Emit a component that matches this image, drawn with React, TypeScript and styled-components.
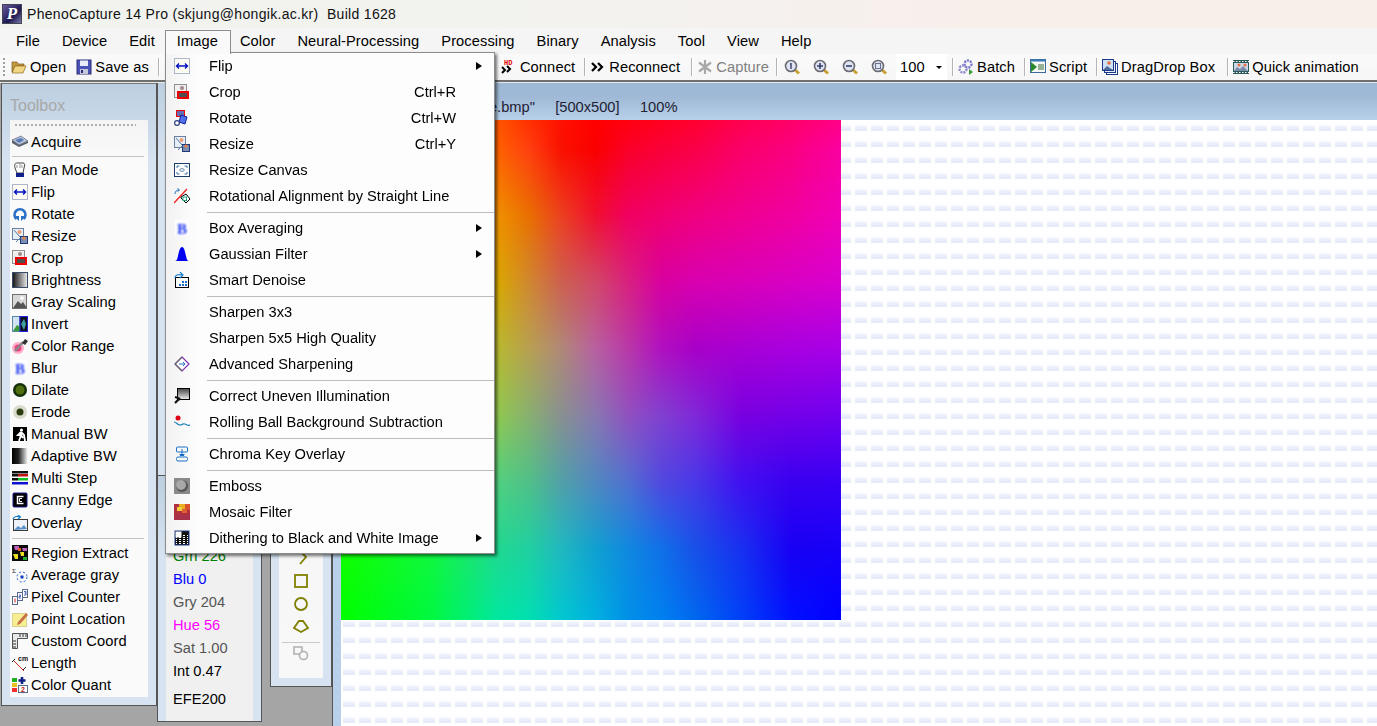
import * as React from 'react';
import styled, { createGlobalStyle } from 'styled-components';

const GlobalStyle = createGlobalStyle`
    html, body {
        margin: 0;
        padding: 0;
        height: 100%;
        overflow: hidden;
        background: #a5a5a5;
        font-family: "Liberation Sans", Arial, sans-serif;
        color: #000;
    }
`;

const Page = styled.div`
    position: relative;
    width: 1377px;
    height: 726px;
    display: flex;
    flex-direction: column;
    overflow: hidden;
`;

const TitleBar = styled.div`
    height: 28px;
    display: flex;
    align-items: center;
    gap: 5px;
    padding-left: 2px;
    background: linear-gradient(90deg, #f1f3ef 0%, #f3f2ef 45%, #f8efeb 70%, #f8efeb 100%);
    font-size: 14px;
    letter-spacing: 0.31px;
    color: #111;
    white-space: pre;
`;

const AppLogo = styled.div`
    width: 20px;
    height: 20px;
    background: linear-gradient(135deg, #6a5a9c, #1c1850 60%, #7a7aaa);
    border: 1px solid #445;
    box-sizing: border-box;
    color: #fff;
    font: italic bold 17px/18px "Liberation Serif", serif;
    text-align: center;
    letter-spacing: 0;
`;

const MenuBar = styled.div`
    height: 26px;
    display: flex;
    align-items: center;
    padding-left: 5px;
    background: #f5f5f5;
`;

const MenuLabel = styled.div<{ $open?: boolean }>`
    position: relative;
    z-index: ${p => (p.$open ? 5 : 0)};
    padding: 0 11px;
    line-height: 26px;
    font-size: 14.67px;
    letter-spacing: 0.08px;
    white-space: nowrap;
    ${p =>
        p.$open &&
        `&::before {
            content: '';
            position: absolute;
            left: -1px;
            right: -2px;
            top: 2px;
            height: 24px;
            background: #f9f9f9;
            border: 1px solid #8c8c8c;
            border-bottom: none;
            box-sizing: border-box;
            z-index: -1;
        }`}
`;

const Toolbar = styled.div`
    height: 26px;
    display: flex;
    align-items: center;
    background: linear-gradient(180deg, #fafafa, #f6f6f6);
    box-sizing: border-box;
    padding-left: 3px;
    font-size: 14.67px;
    letter-spacing: 0.1px;
    white-space: nowrap;
`;

const Grip = styled.div`
    width: 2px;
    height: 18px;
    margin-right: 1px;
    background: repeating-linear-gradient(180deg, #a0a0a0 0 2px, transparent 2px 4px);
`;

const ToolItem = styled.div<{ $disabled?: boolean; $end?: number }>`
    display: flex;
    align-items: center;
    gap: 3px;
    padding: 0 ${p => p.$end ?? 9}px 0 5px;
    color: ${p => (p.$disabled ? '#808080' : '#000')};
`;

const ToolSep = styled.div`
    width: 1px;
    height: 18px;
    background: #b4b4b4;
    box-shadow: 1px 0 0 #fff;
`;

const ToolGap = styled.div<{ $w: number }>`
    width: ${p => p.$w}px;
    flex: none;
`;

const ZoomButton = styled.div`
    width: 29px;
    flex: none;
    display: flex;
    justify-content: flex-start;
`;

const ZoomCombo = styled.div`
    width: 51px;
    height: 26px;
    display: flex;
    align-items: center;
    justify-content: space-between;
    box-sizing: border-box;
    padding: 0 5px 0 4px;
    margin: 0 5px 0 -4px;
    background: #fff;
    &::after {
        content: '';
        border-left: 3px solid transparent;
        border-right: 3px solid transparent;
        border-top: 3px solid #000;
    }
`;

const TopEdge = styled.div`
    height: 3px;
    background: linear-gradient(180deg, #6e6e6e 0 2px, #e8e8e8 2px);
`;

const Workspace = styled.div`
    flex: 1;
    min-height: 0;
    display: flex;
    background: #a5a5a5;
`;

const Dock = styled.div<{ $w: number; $h: number }>`
    width: ${p => p.$w}px;
    height: ${p => p.$h}px;
    flex: none;
    box-sizing: border-box;
    border: 1px solid #555;
    border-top: none;
    background: linear-gradient(180deg, #bccfe0 0, #d7e3f1 80px, #d7e3f1 100%);
`;

const ToolboxDock = styled(Dock)`
    margin-left: 1px;
    padding: 0 8px 0 8px;
    border-left-width: 1px;
    border-top: 1px solid #777;
`;

const ToolboxTitle = styled.div`
    height: 36px;
    line-height: 44px;
    font-size: 16px;
    color: #a8a8a8;
`;

const ToolList = styled.div`
    background: linear-gradient(180deg, #f4f4f4, #fafafa 40px, #fafafa);
    height: 577px;
    padding: 0 2px;
    box-sizing: border-box;
`;

const DottedRule = styled.div`
    height: 11px;
    margin: 0 10px 0 3px;
    background: repeating-linear-gradient(90deg, #b0b0b0 0 2px, transparent 2px 4px) 0 4px / 100% 2px no-repeat;
`;

const ListSep = styled.div<{ $h: number }>`
    height: ${p => p.$h}px;
    display: flex;
    align-items: center;
    &::after {
        content: '';
        flex: 1;
        height: 1px;
        margin-right: 2px;
        background: #c4c4c4;
    }
`;

const ToolRow = styled.div<{ $tall?: boolean }>`
    height: ${p => (p.$tall ? 23 : 22)}px;
    display: flex;
    align-items: center;
    gap: 3px;
    font-size: 14.67px;
    letter-spacing: 0.1px;
    white-space: nowrap;
`;

const MiddleColumn = styled.div`
    width: 105px;
    flex: none;
    display: flex;
    flex-direction: column;
`;

const ReadoutList = styled.div`
    margin: 8px 8px 8px 8px;
    height: 237px;
    box-sizing: border-box;
    background: #f0f0f0;
    padding: 38px 0 0 7px;
    font-size: 14.67px;
`;

const Readout = styled.div<{ $color: string; $h?: number }>`
    height: ${p => p.$h ?? 23}px;
    line-height: 23px;
    color: ${p => p.$color};
    white-space: nowrap;
`;

const HexReadout = styled(Readout)`
    padding-top: 5px;
`;

const ShapeDock = styled(Dock)`
    margin-left: 8px;
    padding: 0 8px 8px 8px;
    background: #d7e3f1;
`;

const ShapeList = styled.div`
    height: 100%;
    background: linear-gradient(180deg, #f2f2f2, #f8f8f8);
    display: flex;
    flex-direction: column;
    align-items: center;
    justify-content: flex-end;
    padding-bottom: 17px;
    box-sizing: border-box;
`;

const ShapeCell = styled.div<{ $h?: number }>`
    height: ${p => p.$h ?? 23}px;
    display: flex;
    align-items: center;
    justify-content: center;
`;

const ShapeSep = styled.div`
    width: 38px;
    height: 1px;
    margin: 4px 0 2px;
    background: #c8c8c8;
`;

const ChildWindow = styled.div`
    flex: 1;
    min-width: 0;
    display: flex;
    flex-direction: column;
    border-left: 1px solid #555;
`;

const ChildHeader = styled.div`
    height: 37px;
    flex: none;
    display: flex;
    align-items: flex-end;
    box-sizing: border-box;
    padding: 0 0 5px 22px;
    background: linear-gradient(180deg, #9db8d4 0, #9fb9d6 14px, #b8d0e9 100%);
    font-size: 14.67px;
    color: #223;
    white-space: pre;
`;

const ChildBody = styled.div`
    flex: 1;
    display: flex;
    min-height: 0;
`;

const SideStrip = styled.div`
    width: 8px;
    flex: none;
    background: #b8d0e9;
`;

const Canvas = styled.div`
    flex: 1;
    min-width: 0;
    background-color: #fff;
    background-image: linear-gradient(90deg, transparent 12px, #fff 12px),
        linear-gradient(180deg, #f0f3fb 0, #e2e8f8 5px, #fff 5px, #fff 12px, #f9fbfe 16px);
    background-size: 16px 16px;
    background-position: 2px 6px;
`;

const Photo = styled.canvas`
    display: block;
    width: 500px;
    height: 500px;
`;

const PopupMenu = styled.div`
    position: absolute;
    left: 165px;
    top: 52px;
    z-index: 4;
    width: 330px;
    height: 502px;
    box-sizing: border-box;
    border: 1px solid #8c8c8c;
    background: linear-gradient(90deg, #f2f2f2 0, #fbfbfb 24px, #fdfdfd 31px, #fdfdfd 100%);
    box-shadow: 2px 2px 3px rgba(0, 0, 0, 0.55);
    font-size: 14.67px;
`;

const PopupItem = styled.div`
    height: 26px;
    display: flex;
    align-items: center;
    white-space: nowrap;
`;

const PopupIcon = styled.div`
    width: 29px;
    margin-left: 1px;
    flex: none;
    display: flex;
    justify-content: center;
`;

const PopupText = styled.div`
    margin-left: 13px;
    flex: 1;
`;

const Shortcut = styled.div`
    margin-right: 38px;
`;

const SubArrow = styled.div`
    width: 0;
    height: 0;
    margin-right: 12px;
    border-left: 6px solid #000;
    border-top: 4.5px solid transparent;
    border-bottom: 4.5px solid transparent;
`;

const PopupSep = styled.div`
    height: 6px;
    display: flex;
    align-items: center;
    padding-left: 41px;
    &::after {
        content: '';
        flex: 1;
        height: 1px;
        background: #bdbdbd;
    }
`;

// colour samples of the test image, bilinear between them
const gridX = [0, 90, 156, 187, 220, 254, 287, 320, 354, 400, 450, 500];
const gridY = [0, 28, 95, 162, 228, 295, 362, 428, 500];
const grid = [
    'ffb000 ff8000 ff5500 ff3000 ff1000 ff0000 ff0010 ff0020 ff0030 ff0050 ff0068 ff0088',
    'ffb800 ff8c00 ff6000 ff4010 fa1000 fa0000 fa0028 fa0038 fa0048 fa0068 fa0080 fa00a0',
    'ffd000 f8b000 f09000 e87000 ec4020 f01030 f00060 f00070 f00080 f00090 f000a0 f000b8',
    'f0e000 e8c400 d8a800 d08830 cc6050 d04868 d82080 d800a0 d800b0 d800b8 d800c4 d800d0',
    'c8e800 c0d020 b8b830 b8a050 b08878 b860a0 b838a8 b010c0 a800c8 a800d4 a800e0 a800e8',
    '90f000 90e030 90c850 88b070 889090 8878b0 9050c0 8040d0 8028d8 7800e0 7400e8 7000f0',
    '60f000 58e840 50d080 50c088 50a0a8 5088c0 5070d0 5048e0 4838e8 4010f0 3800f0 3800f4',
    '10ff00 10f840 20d890 20d0a0 20b8c0 10a0d0 1088e0 1070e8 1850e8 1830f0 1800f4 1800f8',
    '00ff00 00f840 00e8a0 00e0b0 00c8d0 00b0e0 0090e8 0080f0 0068f0 0040f8 0010ff 0000ff',
].map(row => row.split(' ').map(hex => [0, 2, 4].map(i => parseInt(hex.slice(i, i + 2), 16))));

const cellIndex = (stops: number[], v: number) => {
    let i = 0;
    while (i < stops.length - 2 && v >= stops[i + 1]) {
        i++;
    }
    return i;
};

const drawPicture = (ctx: CanvasRenderingContext2D) => {
    const img = ctx.createImageData(500, 500);
    for (let y = 0; y < 500; y++) {
        const r = cellIndex(gridY, y);
        const fy = (y - gridY[r]) / (gridY[r + 1] - gridY[r]);
        for (let x = 0; x < 500; x++) {
            const c = cellIndex(gridX, x);
            const fx = (x - gridX[c]) / (gridX[c + 1] - gridX[c]);
            const o = (y * 500 + x) * 4;
            for (let k = 0; k < 3; k++) {
                const top = grid[r][c][k] * (1 - fx) + grid[r][c + 1][k] * fx;
                const bottom = grid[r + 1][c][k] * (1 - fx) + grid[r + 1][c + 1][k] * fx;
                img.data[o + k] = top * (1 - fy) + bottom * fy;
            }
            img.data[o + 3] = 255;
        }
    }
    ctx.putImageData(img, 0, 0);
};

const TestImage = () => {
    const ref = React.useRef<HTMLCanvasElement>(null);
    React.useEffect(() => {
        const ctx = ref.current && ref.current.getContext('2d');
        if (ctx) {
            drawPicture(ctx);
        }
    }, []);
    return <Photo ref={ref} width={500} height={500} />;
};

const Mag = ({ children }: { children?: React.ReactNode }) => (
    <>
        <path d="M10.5 10.5l4.5 4" stroke="#c8a030" strokeWidth="3" />
        <circle cx="7" cy="7" r="5.5" fill="#dfe4f2" stroke="#6a6a72" strokeWidth="1.6" />
        {children}
    </>
);

const dither = Array.from({ length: 30 }).map((_, i) => (
    <rect key={i} x={2 + (i % 6) * 2 + (i % 2)} y={13 - Math.floor(i / 6) * 2} width="1" height="1" fill="#fff" />
));

const icons: { [name: string]: React.ReactNode } = {
    open: (
        <>
            <path d="M1 3h5l1 2h6v2H4L1 13z" fill="#c89a40" stroke="#7a5a20" strokeWidth="0.7" />
            <path d="M1 14l3-7h11l-3 7z" fill="#f2d684" stroke="#8a6a28" strokeWidth="0.7" />
        </>
    ),
    save: (
        <>
            <rect x="1" y="1" width="14" height="14" fill="#4a52b8" stroke="#2a2e78" />
            <rect x="4" y="1.5" width="8" height="5.5" fill="#e8ecf8" />
            <rect x="4" y="10" width="8" height="5" fill="#c4c8d8" />
            <rect x="5" y="11" width="2" height="3" fill="#2a2e78" />
        </>
    ),
    connect: (
        <>
            <text x="3" y="6" fontSize="7" fontWeight="bold" fill="#e00000" fontFamily="Liberation Mono, monospace">HD</text>
            <path d="M1 8l3 3-3 3M6 7l3 3-3 3" fill="none" stroke="#000" strokeWidth="2" />
        </>
    ),
    reconnect: <path d="M2 4l4 4-4 4M8 4l4 4-4 4" fill="none" stroke="#000" strokeWidth="2.2" />,
    capture: <path d="M8 1v14M2 3.5l12 9M14 3.5l-12 9" fill="none" stroke="#a8a8a8" strokeWidth="2.2" />,
    mag1: <Mag><path d="M7 4v6M6 5h1" stroke="#38406a" strokeWidth="1.4" /></Mag>,
    magPlus: <Mag><path d="M7 4v6M4 7h6" stroke="#38406a" strokeWidth="1.6" /></Mag>,
    magMinus: <Mag><path d="M4 7h6" stroke="#38406a" strokeWidth="1.6" /></Mag>,
    magFit: <Mag><rect x="4.5" y="4.5" width="5" height="5" fill="none" stroke="#6a7090" /></Mag>,
    batch: (
        <>
            <circle cx="10" cy="5" r="3.5" fill="none" stroke="#7a78c8" strokeWidth="2.4" strokeDasharray="2 1" />
            <circle cx="5" cy="10" r="3.5" fill="none" stroke="#8a88c8" strokeWidth="2.4" strokeDasharray="2 1" />
            <path d="M11 10l4 3-4 3z" fill="#3a9a3a" />
        </>
    ),
    script: (
        <>
            <rect x="0.5" y="0.5" width="15" height="13" fill="#f4f8f4" stroke="#3a6a9a" />
            <rect x="0.5" y="0.5" width="15" height="2" fill="#3a7ab8" />
            <path d="M1 3l6 5-6 5z" fill="#2a8a2a" />
            <path d="M8 6h6M8 8h6M8 10h6" stroke="#3a6a3a" />
        </>
    ),
    drag: (
        <>
            <rect x="4.5" y="4.5" width="11" height="11" fill="#fff" stroke="#1c3a8a" />
            <rect x="2.5" y="2.5" width="11" height="11" fill="#e8eef8" stroke="#1c3a8a" />
            <rect x="0.5" y="0.5" width="11" height="11" fill="#cfe0f4" stroke="#1c3a8a" />
            <path d="M1 11l4-4 3 2 3 2z" fill="#506a9a" />
            <circle cx="7" cy="4" r="1.8" fill="#e87040" />
        </>
    ),
    quick: (
        <>
            <rect x="0" y="1" width="16" height="14" fill="#2a5a5a" />
            <path d="M0 2.5h16M0 13.5h16" stroke="#fff" strokeDasharray="1.5 1.5" />
            <rect x="1" y="4" width="14" height="8" fill="#cfd8e8" />
            <path d="M1 12l3-4 3 2 3-3 5 5z" fill="#7a8aa8" />
            <circle cx="6" cy="6" r="1.5" fill="#e87040" />
            <circle cx="12" cy="6" r="1.5" fill="#e87040" />
        </>
    ),
    acquire: (
        <>
            <path d="M0 6l9-4 7 5-9 4z" fill="#b8c4d8" stroke="#6a7488" strokeWidth="0.8" />
            <path d="M0 6v3l7 4 9-4V7l-9 4z" fill="#5a606c" />
            <path d="M3 6l6-2 3 2-5 3z" fill="#5a7ab8" />
        </>
    ),
    pan: (
        <>
            <path d="M3 6c-1-5 1-5 2-5h6c2 0 2 2 1 5l-1 5H5z" fill="#fff" stroke="#444" />
            <path d="M5 3v3M8 2v4M10 3v3" stroke="#666" strokeWidth="0.7" />
            <rect x="4" y="11" width="8" height="4" fill="#10208a" />
        </>
    ),
    flip: (
        <>
            <rect x="0.5" y="0.5" width="15" height="15" fill="#fdfdf4" stroke="#6070a0" strokeDasharray="1 1" />
            <path d="M3 8h10M5 5.5L2.5 8 5 10.5M11 5.5L13.5 8 11 10.5" fill="none" stroke="#0010c0" strokeWidth="1.4" />
        </>
    ),
    rotate: (
        <>
            <path d="M4.5 13A5.5 5.5 0 1 1 11.5 13" fill="none" stroke="#2a70c8" strokeWidth="2.6" />
            <path d="M2 10h5v5zM14 10H9v5z" fill="#2a70c8" />
        </>
    ),
    resize: (
        <>
            <rect x="0.5" y="0.5" width="11" height="11" fill="#e6eef8" stroke="#6a80a0" />
            <rect x="8.5" y="8.5" width="7" height="7" fill="#8090b0" stroke="#1c3a7a" />
            <circle cx="7.5" cy="4" r="2" fill="#f0a070" />
            <circle cx="12" cy="10" r="1.6" fill="#f08040" />
            <path d="M2 2l6 7M4 14l4-4 3 3" fill="none" stroke="#5a7aa8" />
        </>
    ),
    crop: (
        <>
            <rect x="0.5" y="0.5" width="12" height="13" fill="#f0eeee" stroke="#909090" />
            <circle cx="8" cy="4" r="2" fill="#a08888" />
            <rect x="4" y="8" width="10" height="6" fill="#505050" stroke="#f00000" strokeWidth="2" />
        </>
    ),
    brightness: (
        <>
            <defs>
                <linearGradient id="lg-bright" x1="0" x2="1" y1="0" y2="0">
                    <stop offset="0" stopColor="#111" />
                    <stop offset="1" stopColor="#eee" />
                </linearGradient>
            </defs>
            <rect x="0.5" y="0.5" width="15" height="15" fill="url(#lg-bright)" stroke="#3a4a6a" />
        </>
    ),
    gray: (
        <>
            <rect x="0.5" y="0.5" width="14" height="14" fill="#d8d8d8" stroke="#707070" />
            <path d="M1 14l5-7 3 3 2-2 4 6z" fill="#555" />
            <circle cx="10" cy="4" r="1.8" fill="#fff" />
        </>
    ),
    invert: (
        <>
            <rect x="0.5" y="0.5" width="7" height="15" fill="#cfe4f0" stroke="#5a8aa8" />
            <path d="M1 15l4-6 3 2v4z" fill="#3a9a3a" />
            <rect x="8" y="0.5" width="7.5" height="15" fill="#101020" stroke="#2020e0" />
            <path d="M9 8l3-5 2 5-2 6z" fill="#40a0a0" />
        </>
    ),
    colorRange: (
        <>
            <circle cx="6" cy="10" r="6" fill="#ffb0cc" />
            <circle cx="6" cy="10" r="3.5" fill="#f04080" />
            <path d="M3 13L11 4" stroke="#888" strokeWidth="2.6" />
            <path d="M10 5l3-4 3 2-3 4z" fill="#333" />
        </>
    ),
    blur: (
        <>
            <rect x="1" y="0" width="14" height="16" fill="#fff" />
            <text x="8" y="13.5" fontSize="15" fontWeight="bold" fill="#2038f0" textAnchor="middle" fontFamily="Liberation Serif, serif" style={{ filter: 'blur(1px)' }}>B</text>
        </>
    ),
    dilate: (
        <>
            <circle cx="8" cy="8" r="7" fill="#16300a" />
            <circle cx="8" cy="8" r="4.5" fill="#4f6e10" />
        </>
    ),
    erode: (
        <>
            <circle cx="8" cy="8" r="7" fill="#d8dccc" />
            <circle cx="8" cy="8" r="3.5" fill="#2c3c10" />
        </>
    ),
    manual: (
        <>
            <rect x="1" y="1" width="14" height="14" fill="#000" />
            <circle cx="9.5" cy="4" r="1.6" fill="#fff" />
            <path d="M9 6l-3 3h3l-2 6M9 6l3 3 1 6M9 9l2 3" fill="none" stroke="#fff" strokeWidth="1.8" />
        </>
    ),
    adaptive: (
        <>
            <defs>
                <linearGradient id="lg-adaptive" x1="0" x2="1" y1="0" y2="0">
                    <stop offset="0" stopColor="#000" />
                    <stop offset="0.4" stopColor="#222" />
                    <stop offset="1" stopColor="#fff" />
                </linearGradient>
            </defs>
            <rect x="0" y="0" width="16" height="16" fill="url(#lg-adaptive)" />
        </>
    ),
    multi: (
        <>
            <rect x="0" y="1" width="16" height="2.5" fill="#111" />
            <rect x="0" y="4" width="6" height="2.5" fill="#111" />
            <rect x="6" y="4" width="10" height="2.5" fill="#c01010" />
            <rect x="0" y="8" width="6" height="2.5" fill="#111" />
            <rect x="6" y="8" width="10" height="2.5" fill="#10c020" />
            <rect x="0" y="12" width="16" height="2.5" fill="#1010d0" />
        </>
    ),
    canny: (
        <>
            <rect x="1" y="1" width="14" height="14" rx="1" fill="#000" stroke="#1c1c80" />
            <path d="M11.5 4.5h-6v7h6" fill="none" stroke="#fff" strokeWidth="1.5" />
            <path d="M10 6.5H7.5v3H10" fill="none" stroke="#fff" />
        </>
    ),
    overlay: (
        <>
            <rect x="1.5" y="4.5" width="14" height="11" fill="#eef2f8" stroke="#3a3a3a" />
            <path d="M2 15l4-4 3 2 3-3 3 4z" fill="#5a90c8" />
            <path d="M1 4c1-3 5-3 7-2M6 0l2.5 2L6 4" fill="none" stroke="#1a80d0" strokeWidth="1.2" />
        </>
    ),
    region: (
        <>
            <rect x="0" y="0" width="16" height="16" fill="#0a0a0a" />
            <path d="M2 1h5v4H3zM10 3h5v3h-4z" fill="#c060c0" />
            <path d="M1 9h5v5H3zM8 7h4v4H9z" fill="#e8e020" />
            <path d="M11 12h4v3h-4z" fill="#20b030" />
            <path d="M6 3h3v3H6z" fill="#e86020" />
        </>
    ),
    average: (
        <>
            <text x="0" y="6" fontSize="7" fill="#222" fontFamily="Liberation Serif, serif">Σ</text>
            <circle cx="10" cy="10" r="5" fill="none" stroke="#2060d0" strokeDasharray="2 2" />
            <rect x="8.5" y="8.5" width="3" height="3" fill="#1040c0" />
        </>
    ),
    pixel: (
        <>
            <rect x="0.5" y="7.5" width="5" height="8" fill="#fff" stroke="#5a6a8a" />
            <rect x="5.5" y="3.5" width="5" height="8" fill="#fff" stroke="#5a6a8a" />
            <rect x="10.5" y="0.5" width="5" height="8" fill="#fff" stroke="#5a6a8a" />
            <path d="M3 9.5v4" stroke="#d02020" />
            <path d="M7 6h1.5v1.5H7V9h2" fill="none" stroke="#2040b0" strokeWidth="0.8" />
            <path d="M12 2.5h2v1.5h-1.5M14 4v2h-2" fill="none" stroke="#2040b0" strokeWidth="0.8" />
        </>
    ),
    point: (
        <>
            <rect x="0.5" y="2.5" width="14" height="13" fill="#f6ee90" stroke="#b8b060" strokeDasharray="1 1" />
            <path d="M6 11l8-9 2 2-8 9-3 1z" fill="#c87048" />
        </>
    ),
    custom: (
        <>
            <path d="M0.5 0.5h15v5h-10v10h-5z" fill="#e8e8e8" stroke="#555" />
            <path d="M8 1v3M11 1v3M14 1v3M1 8h3M1 11h3M1 14h3" stroke="#333" />
        </>
    ),
    length: (
        <>
            <path d="M1 5l11 11" stroke="#d02020" />
            <path d="M0 7l3-3M11 15l3-3" stroke="#222" />
            <text x="6" y="6" fontSize="7" fontWeight="bold" fill="#111" fontFamily="Liberation Sans, sans-serif">cm</text>
        </>
    ),
    quant: (
        <>
            <rect x="0" y="1" width="5" height="4" fill="#20b020" />
            <rect x="0" y="6" width="5" height="4" fill="#e8c020" />
            <rect x="0" y="11" width="5" height="4" fill="#f03030" />
            <path d="M10 0v7M6.5 3.5h7" stroke="#102080" strokeWidth="2.6" />
            <rect x="6.5" y="8.5" width="9" height="7" fill="#fff" stroke="#5a6a8a" />
            <text x="11" y="15" fontSize="7" fontWeight="bold" fill="#c01010" textAnchor="middle" fontFamily="Liberation Sans, sans-serif">2</text>
        </>
    ),
    rotateBox: (
        <>
            <rect x="2.5" y="0.5" width="8" height="6" fill="#6070b0" stroke="#f00000" />
            <path d="M7 5l6 2-2 7-6-2z" fill="#5070e8" stroke="#1020a0" />
            <circle cx="3" cy="13" r="2.4" fill="#fff" stroke="#304080" strokeWidth="1.2" />
        </>
    ),
    canvas: (
        <>
            <rect x="0.5" y="1.5" width="15" height="13" fill="#fff" stroke="#1c3a6a" />
            <path d="M3 6V4h2.5M13 6V4h-2.5M3 10v2h2.5M13 10v2h-2.5" fill="none" stroke="#3a70a8" />
            <ellipse cx="8" cy="8" rx="2.2" ry="1.4" fill="none" stroke="#6a8ab0" />
        </>
    ),
    align: (
        <>
            <path d="M7 9l5-3 4 5-4 4-5-5z" fill="#fff" stroke="#000" />
            <rect x="9" y="9" width="3.5" height="3.5" fill="none" stroke="#20a080" />
            <path d="M0 15L13 1" stroke="#f02020" strokeWidth="1.3" />
            <path d="M1 6c0-3 2-4 4-4M3.5 0.5L5.5 2 3.5 3.5" fill="none" stroke="#2070c0" />
        </>
    ),
    gaussian: <path d="M0 15c3 0 3-1 4-5 1-5 2-9 4-9s3 4 4 9c1 4 1 5 4 5z" fill="#0000f0" />,
    smart: (
        <>
            <rect x="1.5" y="5.5" width="13" height="10" fill="#fff" stroke="#000" />
            <path d="M8 12h2v2H8zM11 9h2v2h-2zM5 12h2v2H5zM11 12h2v2h-2zM8 9h2v2H8z" fill="#1a70c8" />
            <path d="M1 6c0-3 3-4 7-3M6 0l3 3-3 3" fill="none" stroke="#1a80d0" strokeWidth="1.2" />
        </>
    ),
    sharpen: (
        <>
            <path d="M8 1l7 7-7 7-7-7z" fill="#fff" stroke="#7a2ab0" strokeWidth="1.1" />
            <path d="M1 8l7 7M1 8l7-7" stroke="#666" strokeWidth="1.1" />
            <path d="M5 8h6M9 6l2 2-2 2" fill="none" stroke="#2070c8" />
        </>
    ),
    correct: (
        <>
            <defs>
                <linearGradient id="lg-correct" x1="0" x2="0" y1="0" y2="1">
                    <stop offset="0" stopColor="#444" />
                    <stop offset="1" stopColor="#eee" />
                </linearGradient>
            </defs>
            <rect x="3.5" y="0.5" width="12" height="11" fill="url(#lg-correct)" stroke="#000" />
            <path d="M1 15l5-5M1 9l3 1 2 2" fill="none" stroke="#111" strokeWidth="2.2" />
        </>
    ),
    rolling: (
        <>
            <circle cx="4" cy="4" r="2.5" fill="#e00010" />
            <path d="M0 8c3 0 3 3 6 3s2-2 5-1 2 2 5 1" fill="none" stroke="#1a80b8" strokeWidth="1.2" />
        </>
    ),
    chroma: (
        <>
            <rect x="2.5" y="1" width="11" height="5" rx="1" fill="none" stroke="#1a70c8" />
            <rect x="2.5" y="11" width="11" height="4" rx="1.5" fill="none" stroke="#1a70c8" />
            <path d="M8 3v6M5.5 8.5h5M6 9.5h4" fill="none" stroke="#1a70c8" />
        </>
    ),
    emboss: (
        <>
            <rect x="0" y="0" width="16" height="16" fill="#8a8a8a" />
            <circle cx="8" cy="8" r="6" fill="#555" />
            <circle cx="7" cy="7" r="5" fill="#a8a8a8" />
        </>
    ),
    mosaic: (
        <>
            <rect x="0" y="0" width="16" height="16" fill="#b03040" />
            <rect x="5" y="0" width="6" height="5" fill="#e8b020" />
            <rect x="3" y="3" width="5" height="4" fill="#f0d040" />
            <rect x="8" y="5" width="5" height="4" fill="#e06030" />
            <rect x="0" y="11" width="16" height="5" fill="#a83048" />
            <rect x="11" y="0" width="5" height="6" fill="#d85030" />
        </>
    ),
    dither: (
        <>
            <rect x="1" y="1" width="14" height="14" fill="#111" stroke="#203a8a" />
            <rect x="1.5" y="1.5" width="6" height="6" fill="#f8f8f8" />
            {dither}
        </>
    ),
};

const Icon = ({ name, size = 16 }: { name: string; size?: number }) => (
    <svg width={size} height={size} viewBox="0 0 16 16" style={{ flex: 'none', display: 'block' }}>
        {icons[name]}
    </svg>
);

const menus = ['File', 'Device', 'Edit', 'Image', 'Color', 'Neural-Processing', 'Processing', 'Binary', 'Analysis', 'Tool', 'View', 'Help'];

const rowsA = [
    ['pan', 'Pan Mode'], ['flip', 'Flip'], ['rotate', 'Rotate'], ['resize', 'Resize'], ['crop', 'Crop'],
    ['brightness', 'Brightness'], ['gray', 'Gray Scaling'], ['invert', 'Invert'], ['colorRange', 'Color Range'],
    ['blur', 'Blur'], ['dilate', 'Dilate'], ['erode', 'Erode'], ['manual', 'Manual BW'], ['adaptive', 'Adaptive BW'],
    ['multi', 'Multi Step'], ['canny', 'Canny Edge'],
];

const rowsB = [
    ['region', 'Region Extract'], ['average', 'Average gray'], ['pixel', 'Pixel Counter'], ['point', 'Point Location'],
    ['custom', 'Custom Coord'], ['length', 'Length'], ['quant', 'Color Quant'],
];

type PopupEntry = { icon?: string; text?: string; key?: string; sub?: boolean };

const popup: PopupEntry[] = [
    { icon: 'flip', text: 'Flip', sub: true },
    { icon: 'crop', text: 'Crop', key: 'Ctrl+R' },
    { icon: 'rotateBox', text: 'Rotate', key: 'Ctrl+W' },
    { icon: 'resize', text: 'Resize', key: 'Ctrl+Y' },
    { icon: 'canvas', text: 'Resize Canvas' },
    { icon: 'align', text: 'Rotational Alignment by Straight Line' },
    {},
    { icon: 'blur', text: 'Box Averaging', sub: true },
    { icon: 'gaussian', text: 'Gaussian Filter', sub: true },
    { icon: 'smart', text: 'Smart Denoise' },
    {},
    { text: 'Sharpen 3x3' },
    { text: 'Sharpen 5x5 High Quality' },
    { icon: 'sharpen', text: 'Advanced Sharpening' },
    {},
    { icon: 'correct', text: 'Correct Uneven Illumination' },
    { icon: 'rolling', text: 'Rolling Ball Background Subtraction' },
    {},
    { icon: 'chroma', text: 'Chroma Key Overlay' },
    {},
    { icon: 'emboss', text: 'Emboss' },
    { icon: 'mosaic', text: 'Mosaic Filter' },
    { icon: 'dither', text: 'Dithering to Black and White Image', sub: true },
];

const readouts = [
    ['#008000', 'Grn 226'], ['#0000ff', 'Blu 0'], ['#555555', 'Gry 204'], ['#ff00ff', 'Hue 56'],
    ['#555555', 'Sat 1.00'], ['#000000', 'Int 0.47'],
];

const olive = '#808000';

const App = () => (
    <Page>
        <GlobalStyle />
        <TitleBar>
            <AppLogo>P</AppLogo>
            PhenoCapture 14 Pro (skjung@hongik.ac.kr)  Build 1628
        </TitleBar>
        <MenuBar>
            {menus.map(m => (
                <MenuLabel key={m} $open={m === 'Image'}>{m}</MenuLabel>
            ))}
        </MenuBar>
        <Toolbar>
            <Grip />
            <ToolItem $end={5}><Icon name="open" />Open</ToolItem>
            <ToolItem><Icon name="save" />Save as</ToolItem>
            <ToolSep />
            <ToolGap $w={337} />
            <ToolItem><Icon name="connect" />Connect</ToolItem>
            <ToolSep />
            <ToolItem $end={11}><Icon name="reconnect" />Reconnect</ToolItem>
            <ToolSep />
            <ToolItem $disabled $end={7}><Icon name="capture" />Capture</ToolItem>
            <ToolSep />
            <ToolGap $w={7} />
            <ZoomButton><Icon name="mag1" /></ZoomButton>
            <ZoomButton><Icon name="magPlus" /></ZoomButton>
            <ZoomButton><Icon name="magMinus" /></ZoomButton>
            <ZoomButton><Icon name="magFit" /></ZoomButton>
            <ZoomCombo>100</ZoomCombo>
            <ToolSep />
            <ToolItem><Icon name="batch" />Batch</ToolItem>
            <ToolSep />
            <ToolItem><Icon name="script" />Script</ToolItem>
            <ToolSep />
            <ToolItem $end={12}><Icon name="drag" />DragDrop Box</ToolItem>
            <ToolSep />
            <ToolItem><Icon name="quick" />Quick animation</ToolItem>
        </Toolbar>
        <TopEdge />
        <Workspace>
            <ToolboxDock $w={156} $h={623}>
                <ToolboxTitle>Toolbox</ToolboxTitle>
                <ToolList>
                    <DottedRule />
                    <ToolRow><Icon name="acquire" />Acquire</ToolRow>
                    <ListSep $h={6} />
                    {rowsA.map(([icon, text]) => (
                        <ToolRow key={text}><Icon name={icon} />{text}</ToolRow>
                    ))}
                    <ToolRow $tall><Icon name="overlay" />Overlay</ToolRow>
                    <ListSep $h={8} />
                    {rowsB.map(([icon, text]) => (
                        <ToolRow key={text}><Icon name={icon} />{text}</ToolRow>
                    ))}
                </ToolList>
            </ToolboxDock>
            <MiddleColumn>
                <Dock $w={105} $h={393} />
                <Dock $w={105} $h={246}>
                    <ReadoutList>
                        <Readout $color="#000" />
                        {readouts.map(([color, text]) => (
                            <Readout key={text} $color={color}>{text}</Readout>
                        ))}
                        <HexReadout $color="#000" $h={28}>EFE200</HexReadout>
                    </ReadoutList>
                </Dock>
            </MiddleColumn>
            <ShapeDock $w={62} $h={604}>
                <ShapeList>
                    <ShapeCell>
                        <svg width="16" height="16" viewBox="0 0 16 16">
                            <path d="M2 2h6l5 5-6 7" fill="none" stroke={olive} strokeWidth="1.8" />
                        </svg>
                    </ShapeCell>
                    <ShapeCell>
                        <svg width="16" height="16" viewBox="0 0 16 16">
                            <rect x="2" y="2" width="12" height="12" fill="none" stroke={olive} strokeWidth="1.8" />
                        </svg>
                    </ShapeCell>
                    <ShapeCell>
                        <svg width="16" height="16" viewBox="0 0 16 16">
                            <circle cx="8" cy="8" r="6" fill="none" stroke={olive} strokeWidth="1.8" />
                        </svg>
                    </ShapeCell>
                    <ShapeCell>
                        <svg width="16" height="16" viewBox="0 0 16 16">
                            <path d="M6 2h4l5 7-7 4-7-4z" fill="none" stroke={olive} strokeWidth="1.8" />
                        </svg>
                    </ShapeCell>
                    <ShapeSep />
                    <ShapeCell $h={16}>
                        <svg width="16" height="16" viewBox="0 0 16 16">
                            <path d="M9 9H1V2h8z" fill="none" stroke="#b0b0b0" strokeWidth="1.6" />
                            <circle cx="10.5" cy="10.5" r="4" fill="#f8f8f8" stroke="#b0b0b0" strokeWidth="1.6" />
                        </svg>
                    </ShapeCell>
                </ShapeList>
            </ShapeDock>
            <ChildWindow>
                <ChildHeader>{'"Color_Chart_Sample.bmp"     [500x500]     100%'}</ChildHeader>
                <ChildBody>
                    <SideStrip />
                    <Canvas>
                        <TestImage />
                    </Canvas>
                </ChildBody>
            </ChildWindow>
        </Workspace>
        <PopupMenu>
            {popup.map((item, i) =>
                item.text ? (
                    <PopupItem key={i}>
                        <PopupIcon>{item.icon && <Icon name={item.icon} />}</PopupIcon>
                        <PopupText>{item.text}</PopupText>
                        {item.key && <Shortcut>{item.key}</Shortcut>}
                        {item.sub && <SubArrow />}
                    </PopupItem>
                ) : (
                    <PopupSep key={i} />
                ),
            )}
        </PopupMenu>
    </Page>
);

export default App;
